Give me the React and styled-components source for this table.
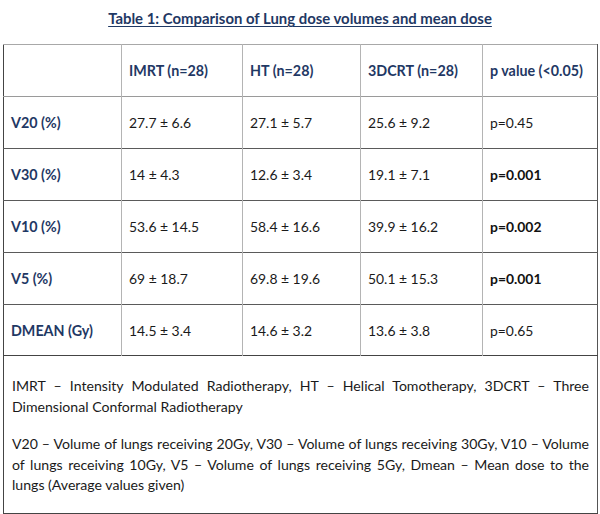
import React from "react";
import styled, { createGlobalStyle } from "styled-components";

const Global = createGlobalStyle`
  html, body { margin: 0; padding: 0; background: #ffffff; }
  body { font-family: Lato, "Open Sans", Arial, sans-serif; }
`;

const Page = styled.div`
  width: 600px;
  height: 514px;
  box-sizing: border-box;
  padding: 9px 3px 0 3px;
  background: #fff;
`;

const Title = styled.h1`
  margin: 0 0 17px 0;
  text-align: center;
  font-size: 14.9px;
  line-height: 18px;
  font-weight: 700;
  color: #1f3864;
  text-decoration: underline;
  text-underline-offset: 2px;
  text-decoration-thickness: 1px;
`;

const Table = styled.table`
  width: 594px;
  border-collapse: collapse;
  table-layout: fixed;
  border-left: 1px solid #444;
  border-right: 1px solid #555;
  border-bottom: 1px solid #444;
  border-top: 1px solid #a8a8a8;
`;

const Row = styled.tr`
  height: ${(p) => p.$h}px;
  border-bottom: 1px solid ${(p) => p.$line};
`;

const Cell = styled.td`
  padding: 0 0 0 7px;
  vertical-align: middle;
  border-left: 1px solid #b4b4b4;
  &:first-child { border-left: none; }
  font-size: 13.9px;
  color: ${(p) => (p.$bold ? "#111" : "#1a1a1a")};
  font-weight: ${(p) => (p.$bold ? 700 : 400)};
  white-space: nowrap;
`;

const HeadCell = styled(Cell)`
  color: #1f3864;
  font-weight: 700;
  font-size: 14.3px;
`;

const LegendCell = styled.td`
  height: 158px;
  box-sizing: border-box;
  vertical-align: top;
  padding: 20px 8px 0 8px;
  font-size: 14.1px;
  line-height: 20.5px;
  color: #1a1a1a;
`;

const Para = styled.p`
  margin: 0 0 ${(p) => (p.$last ? 0 : 17)}px 0;
`;

const Line = styled.span`
  display: block;
  white-space: nowrap;
  text-align: justify;
  text-align-last: ${(p) => (p.$end ? "left" : "justify")};
`;

const cols = [118, 121, 118, 122, 115];

const rows = [
  ["V20 (%)", "27.7 ± 6.6", "27.1 ± 5.7", "25.6 ± 9.2", "p=0.45", false],
  ["V30 (%)", "14 ± 4.3", "12.6 ± 3.4", "19.1 ± 7.1", "p=0.001", true],
  ["V10 (%)", "53.6 ± 14.5", "58.4 ± 16.6", "39.9 ± 16.2", "p=0.002", true],
  ["V5 (%)", "69 ± 18.7", "69.8 ± 19.6", "50.1 ± 15.3", "p=0.001", true],
  ["DMEAN (Gy)", "14.5 ± 3.4", "14.6 ± 3.2", "13.6 ± 3.8", "p=0.65", false],
];

export default function App() {
  return (
    <Page>
      <Global />
      <Title>Table 1: Comparison of Lung dose volumes and mean dose</Title>
      <Table>
        <colgroup>
          {cols.map((w, i) => (
            <col key={i} style={{ width: w }} />
          ))}
        </colgroup>
        <tbody>
          <Row $h={52} $line="#9a9a9a">
            <HeadCell />
            <HeadCell>IMRT (n=28)</HeadCell>
            <HeadCell>HT (n=28)</HeadCell>
            <HeadCell>3DCRT (n=28)</HeadCell>
            <HeadCell>p value (&lt;0.05)</HeadCell>
          </Row>
          {rows.map((r, i) => (
            <Row key={r[0]} $h={i === 4 ? 51 : 52} $line={i === 4 ? "#444" : "#5a5a5a"}>
              <HeadCell>{r[0]}</HeadCell>
              <Cell>{r[1]}</Cell>
              <Cell>{r[2]}</Cell>
              <Cell>{r[3]}</Cell>
              <Cell $bold={r[5]}>{r[4]}</Cell>
            </Row>
          ))}
          <tr>
            <LegendCell colSpan={5}>
              <Para>
                <Line>
                  IMRT – Intensity Modulated Radiotherapy, HT – Helical Tomotherapy, 3DCRT – Three
                </Line>
                <Line $end>Dimensional Conformal Radiotherapy</Line>
              </Para>
              <Para $last>
                <Line>
                  V20 – Volume of lungs receiving 20Gy, V30 – Volume of lungs receiving 30Gy, V10 – Volume
                </Line>
                <Line>
                  of lungs receiving 10Gy, V5 – Volume of lungs receiving 5Gy, Dmean – Mean dose to the
                </Line>
                <Line $end>lungs (Average values given)</Line>
              </Para>
            </LegendCell>
          </tr>
        </tbody>
      </Table>
    </Page>
  );
}
